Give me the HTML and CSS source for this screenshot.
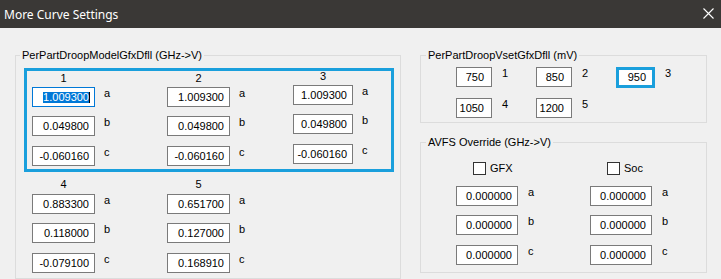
FILE: index.html
```html
<!DOCTYPE html>
<html>
<head>
  <title>More Curve Settings</title>
  <link rel="stylesheet" href="styles.css">
</head>
<body>
  <!-- Window title bar -->
  <div class="titlebar">
    <span class="title">More Curve Settings</span>
    <svg class="close" width="11" height="11" viewBox="0 0 11 11">
      <path d="M0.5 0.5 L10.5 10.5 M10.5 0.5 L0.5 10.5" stroke="#fff" stroke-width="1.1" fill="none"/>
    </svg>
  </div>

  <div class="main">
    <!-- Droop model -->
    <fieldset class="group model">
      <legend>PerPartDroopModelGfxDfll (GHz-&gt;V)</legend>
      <div class="hl-box">
        <div class="col">
          <div class="col-head">1</div>
          <div class="row"><div class="tb focus"><span class="sel">1.009300</span></div><span class="coef">a</span></div>
          <div class="row"><div class="tb">0.049800</div><span class="coef">b</span></div>
          <div class="row"><div class="tb">-0.060160</div><span class="coef">c</span></div>
        </div>
        <div class="col">
          <div class="col-head">2</div>
          <div class="row"><div class="tb">1.009300</div><span class="coef">a</span></div>
          <div class="row"><div class="tb">0.049800</div><span class="coef">b</span></div>
          <div class="row"><div class="tb">-0.060160</div><span class="coef">c</span></div>
        </div>
        <div class="col up">
          <div class="col-head">3</div>
          <div class="row"><div class="tb">1.009300</div><span class="coef">a</span></div>
          <div class="row"><div class="tb">0.049800</div><span class="coef">b</span></div>
          <div class="row"><div class="tb">-0.060160</div><span class="coef">c</span></div>
        </div>
      </div>
      <div class="lower">
        <div class="col">
          <div class="col-head">4</div>
          <div class="row"><div class="tb">0.883300</div><span class="coef">a</span></div>
          <div class="row"><div class="tb">0.118000</div><span class="coef">b</span></div>
          <div class="row"><div class="tb">-0.079100</div><span class="coef">c</span></div>
        </div>
        <div class="col">
          <div class="col-head">5</div>
          <div class="row"><div class="tb">0.651700</div><span class="coef">a</span></div>
          <div class="row"><div class="tb">0.127000</div><span class="coef">b</span></div>
          <div class="row"><div class="tb">0.168910</div><span class="coef">c</span></div>
        </div>
      </div>
    </fieldset>

    <div class="side">
      <!-- Vset per point -->
      <fieldset class="group">
        <legend>PerPartDroopVsetGfxDfll (mV)</legend>
        <div class="vset">
          <div class="row"><div class="tb small">750</div><span class="coef">1</span></div>
          <div class="row"><div class="tb small">850</div><span class="coef">2</span></div>
          <div class="row"><div class="tb small hl">950</div><span class="coef">3</span></div>
          <div class="row"><div class="tb small">1050</div><span class="coef">4</span></div>
          <div class="row"><div class="tb small">1200</div><span class="coef">5</span></div>
        </div>
      </fieldset>

      <!-- AVFS override -->
      <fieldset class="group">
        <legend>AVFS Override (GHz-&gt;V)</legend>
        <div class="avfs">
          <div class="col">
            <div class="check"><span class="box"></span>GFX</div>
            <div class="row"><div class="tb">0.000000</div><span class="coef">a</span></div>
            <div class="row"><div class="tb">0.000000</div><span class="coef">b</span></div>
            <div class="row"><div class="tb">0.000000</div><span class="coef">c</span></div>
          </div>
          <div class="col">
            <div class="check"><span class="box"></span>Soc</div>
            <div class="row"><div class="tb">0.000000</div><span class="coef">a</span></div>
            <div class="row"><div class="tb">0.000000</div><span class="coef">b</span></div>
            <div class="row"><div class="tb">0.000000</div><span class="coef">c</span></div>
          </div>
        </div>
      </fieldset>
    </div>
  </div>
</body>
</html>
```

FILE: styles.css
```css
body {
  margin: 0;
  width: 721px;
  height: 279px;
  overflow: hidden;
  background: #f0f0f0;
  color: #000;
  font-family: "Liberation Sans", Arial, sans-serif;
  font-size: 11px;
  line-height: 13px;
}
/* Title bar */
.titlebar {
  height: 28px;
  background: #3a3836;
  display: flex;
  align-items: center;
  justify-content: space-between;
  padding: 0 7px 0 4px;
}
.title {
  color: #fff;
  font-family: "Noto Sans", sans-serif;
  font-size: 12px;
}
.close {
  display: block;
  margin-top: -2px;
}
/* Layout */
.main {
  display: flex;
  gap: 19px;
  padding: 21px 0 0 15px;
}
.side {
  width: 287px;
  display: flex;
  flex-direction: column;
  gap: 13px;
}
/* Group boxes */
.group {
  margin: 0;
  padding: 0;
  border: 1px solid #dcdcdc;
  min-width: 0;
}
.group legend {
  padding: 0 2px;
  margin-left: 5px;
  line-height: 13px;
}
.model {
  width: 386px;
  height: 230px;
  box-sizing: border-box;
}
.model legend {
  margin-left: 4px;
}
/* Text boxes */
.tb {
  width: 63px;
  height: 20px;
  box-sizing: border-box;
  border: 1px solid #7a7a7a;
  background: #fff;
  text-align: right;
  padding-right: 5px;
  line-height: 18px;
  white-space: nowrap;
}
.tb.focus {
  border-color: #0078d7;
}
.sel {
  background: #0078d7;
  color: #fff;
  display: inline-block;
  line-height: 11px;
  border-right: 1px solid #000;
  margin-right: -1px;
}
.tb.small {
  width: 36px;
  padding-right: 7px;
}
.tb.hl {
  width: 39px;
  height: 21px;
  border: 3px solid #1a9fdc;
  padding-right: 6px;
  line-height: 15px;
}
.row {
  display: flex;
  align-items: flex-start;
}
.coef {
  margin-left: 9px;
}
/* Column of a / b / c coefficients */
.col {
  display: flex;
  flex-direction: column;
}
.col-head {
  width: 63px;
  text-align: center;
  margin-bottom: 2px;
}
.col .row + .row {
  margin-top: 9px;
}
.col .row:last-child {
  margin-top: 10px;
}
.hl-box {
  border: 3px solid #1a9fdc;
  margin: 6px 6px 0 8px;
  padding: 1px 0 3px 5px;
  display: grid;
  grid-template-columns: 135px 126px 1fr;
}
.col.up {
  margin-top: -2px;
}
.col.up .tb {
  width: 60px;
}
.col.up .col-head {
  width: 60px;
}
.lower {
  display: grid;
  grid-template-columns: 135px 135px;
  padding: 6px 0 0 16px;
}
.lower .col-head {
  margin-bottom: 3px;
}
/* Vset box */
.vset {
  display: grid;
  grid-template-columns: 80px 80px 80px;
  row-gap: 10px;
  padding: 5px 0 4px 35px;
}
.vset .coef {
  margin-left: 10px;
}
/* AVFS box */
.avfs {
  display: grid;
  grid-template-columns: 134px 134px;
  padding: 13px 0 7px 35px;
}
.avfs .tb {
  width: 62px;
}
.avfs .coef {
  margin-left: 10px;
}
.check {
  display: flex;
  align-items: center;
  gap: 4px;
  margin-left: 17px;
  height: 13px;
  margin-bottom: 11px;
}
.box {
  width: 13px;
  height: 13px;
  box-sizing: border-box;
  border: 1px solid #333;
  background: #fff;
}
```
